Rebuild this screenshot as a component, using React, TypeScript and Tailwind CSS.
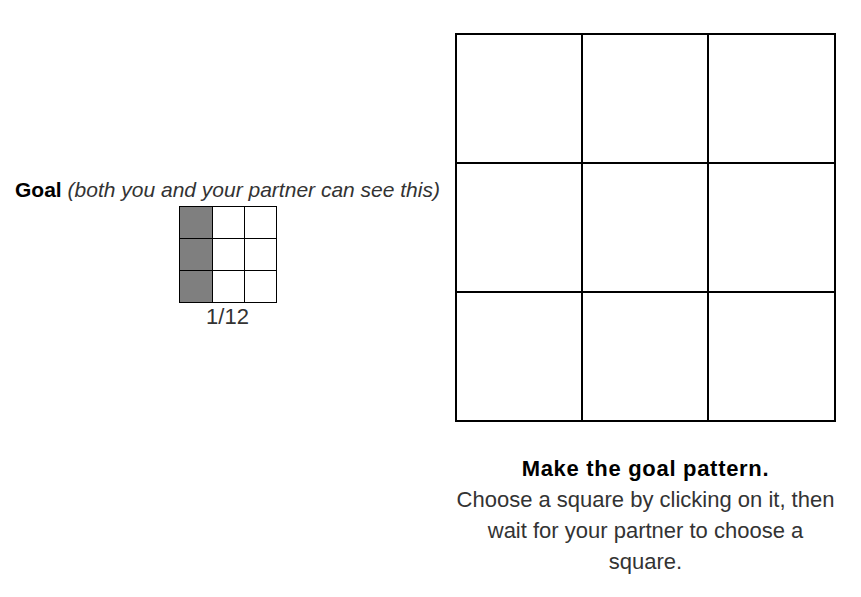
import React from "react";

const font = { fontFamily: '"Liberation Sans", Arial, Helvetica, sans-serif' };

export default function App() {
  const bigCols = ["w-[124px]", "w-[124px]", "w-[125px]"];
  return (
    <div className="flex w-[861px] h-[597px] bg-white text-[#222]" style={font}>
      <div className="w-[455px] flex flex-col items-center pt-[176px]">
        <div className="text-[21px] leading-[28px] whitespace-nowrap">
          <span className="font-bold text-black">Goal</span>{" "}
          <span className="italic text-[#333]">(both you and your partner can see this)</span>
        </div>
        <div className="mt-[2px] grid grid-cols-[32px_31px_31px] grid-rows-[31px_31px_31px] gap-px bg-black p-px">
          {Array.from({ length: 9 }).map((_, i) => (
            <div key={i} className={i % 3 === 0 ? "bg-[#7f7f7f]" : "bg-white"} />
          ))}
        </div>
        <div className="text-[22px] leading-[28px] text-[#333]">1/12</div>
      </div>
      <div className="w-[381px] flex flex-col pt-[33px]">
        <div className="grid grid-cols-[124px_124px_125px] grid-rows-[127px_127px_127px] gap-[2px] bg-black p-[2px] w-[381px]">
          {Array.from({ length: 9 }).map((_, i) => (
            <div key={i} className={"bg-white " + bigCols[i % 3]} />
          ))}
        </div>
        <div className="mt-[31px] text-center text-[22px] leading-[31px]">
          <div className="font-bold text-black tracking-[0.7px]">Make the goal pattern.</div>
          <div className="text-[#333]">
            Choose a square by clicking on it, then wait for your partner to choose a square.
          </div>
        </div>
      </div>
    </div>
  );
}
